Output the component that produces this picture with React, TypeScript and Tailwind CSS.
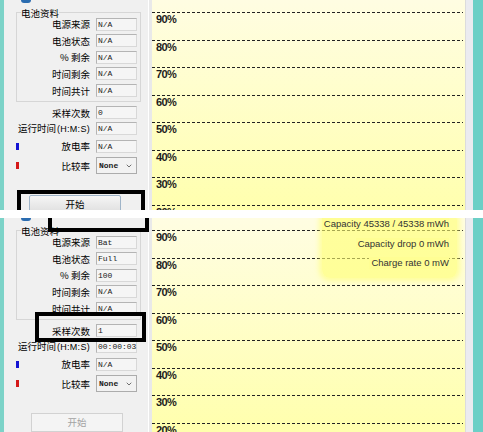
import { ChevronDown } from 'lucide-react';

interface PanelValues {
  source: string;
  state: string;
  remain: string;
  timeLeft: string;
  timeTotal: string;
  samples: string;
  runTime: string;
  rate: string;
  running: boolean;
}

const cjk = "font-['Noto_Sans_CJK_SC',sans-serif]";
const steps = ['90%', '80%', '70%', '60%', '50%', '40%', '30%', '20%'];

function Field({ value }: { value: string }) {
  return (
    <div className="h-[13px] w-[41px] shrink-0 border border-[#b4b4b4] border-b-[#d8d8d8] border-r-[#d8d8d8] bg-[#f5f5f5] pl-[1px] font-['Liberation_Mono',monospace] text-[8px] leading-[11px] text-[#1a1a1a]">
      {value}
    </div>
  );
}

function GroupRow({ label, value }: { label: string; value: string }) {
  return (
    <div className="flex h-[16.6px] items-center gap-[6px]">
      <span className="w-[73px] text-right">{label}</span>
      <Field value={value} />
    </div>
  );
}

function Panel({ v, marks }: { v: PanelValues; marks: 'top' | 'bottom' }) {
  return (
    <div className={`relative flex w-[144px] shrink-0 flex-col bg-[#f0f0f0] text-[9.5px] leading-[12px] text-black ${cjk}`}>
      <div className="ml-[17px] h-[3px] w-[10px] rounded-b-full bg-[#2b6cb0]" />

      <fieldset className="ml-[12px] mt-[4px] w-[125px] border border-[#d6d6d6] pb-[2px]">
        <legend className="ml-[4px] h-[12px] leading-[12px]">电池资料</legend>
        <div className="-mt-[3px]">
          <GroupRow label="电源来源" value={v.source} />
          <GroupRow label="电池状态" value={v.state} />
          <GroupRow label="% 剩余" value={v.remain} />
          <GroupRow label="时间剩余" value={v.timeLeft} />
          <GroupRow label="时间共计" value={v.timeTotal} />
        </div>
      </fieldset>

      <div className="mt-[3px] flex h-[16.5px] items-center gap-[6px]">
        <span className="w-[86px] text-right">采样次数</span>
        <Field value={v.samples} />
      </div>
      <div className="flex h-[16.5px] items-center gap-[6px]">
        <span className="w-[86px] whitespace-nowrap text-right">
          运行时间<span className="ml-[1px] font-['Liberation_Sans',sans-serif] text-[9px] tracking-[0.3px]">(H:M:S)</span>
        </span>
        <Field value={v.runTime} />
      </div>
      <div className="mt-[1px] flex h-[17px] items-center gap-[6px]">
        <div className="flex w-[86px] items-center">
          <span className="ml-[12px] h-[7px] w-[3px] bg-[#1414d2]" />
          <span className="flex-1 text-right">放电率</span>
        </div>
        <Field value={v.rate} />
      </div>
      <div className="mt-[3px] flex h-[18px] items-center gap-[6px]">
        <div className="flex w-[86px] items-center">
          <span className="ml-[12px] h-[7px] w-[3px] bg-[#d41818]" />
          <span className="flex-1 text-right">比较率</span>
        </div>
        <div className="flex h-[17px] w-[41px] items-center justify-between border border-[#acacac] bg-[#f2f2f2] pl-[2px] pr-[3px] font-['Liberation_Mono',monospace] text-[8px] font-bold text-[#222]">
          None
          <ChevronDown size={8} strokeWidth={2.5} className="text-[#555]" />
        </div>
      </div>

      {v.running ? (
        <div className="ml-[27px] mt-[20px] flex h-[20px] w-[92px] items-center justify-center border border-[#d2d2d2] bg-[#f4f4f4] text-[#a3a3a3]">
          开始
        </div>
      ) : (
        <div className="ml-[25px] mt-[20px] flex h-[20px] w-[92px] items-center justify-center rounded-[2px] border border-[#9fb4c8] bg-linear-to-b from-[#f6f6f6] to-[#dedede] text-black">
          开始
        </div>
      )}

      {marks === 'top' && (
        <div className="absolute left-[13px] top-[190px] h-[40px] w-[128px] border-[4px] border-black" />
      )}
      {marks === 'bottom' && (
        <>
          <div className="absolute left-[44px] top-[-20px] h-[34px] w-[101px] border-[4px] border-black" />
          <div className="absolute left-[31px] top-[94px] h-[30px] w-[111px] border-[4px] border-black" />
        </>
      )}
    </div>
  );
}

function Chart({ overlay }: { overlay: boolean }) {
  return (
    <div className="relative flex-1 bg-linear-to-b from-[#fffde2] to-[#ffffac] pt-[12px]">
      {steps.map((s) => (
        <div key={s} className="h-[27.5px]">
          <div className="mr-[2px] h-px bg-[repeating-linear-gradient(90deg,#222_0_3px,transparent_3px_5px)]" />
          <div className="ml-[4px] mt-[1px] font-['Liberation_Sans',sans-serif] text-[11px] font-bold leading-[10px] tracking-[-0.6px] text-[#1c1c1c]">
            {s}
          </div>
        </div>
      ))}
      {overlay && (
        <div className="absolute left-[170px] top-[-6px] flex h-[66px] w-[135px] flex-col items-end gap-[7.5px] whitespace-nowrap rounded-[8px] bg-[#ffff70]/60 pr-[8px] pt-[6px] font-['Liberation_Sans',sans-serif] text-[9.5px] leading-[12px] text-[#333] shadow-[0_0_5px_3px_rgba(255,255,110,0.55)]">
          <span className="bg-[#fffe94] pl-[2px]">Capacity 45338 / 45338 mWh</span>
          <span className="bg-[#fffe94] pl-[2px]">Capacity drop 0 mWh</span>
          <span className="bg-[#fffe94] pl-[2px]">Charge rate 0 mW</span>
        </div>
      )}
    </div>
  );
}

function BatteryWindow({ v, top }: { v: PanelValues; top: boolean }) {
  return (
    <div className="flex h-[214px] w-[483px]">
      <div className="w-[4px] shrink-0 bg-[#7cd3c8]" />
      <Panel v={v} marks={top ? 'top' : 'bottom'} />
      <div className="w-[4px] shrink-0 border-l border-white bg-[#e9e9e9]" />
      <Chart overlay={!top} />
      <div className="w-[8px] shrink-0 border-l border-[#dcdcdc] bg-[#ebebf0]" />
      <div className="w-[10px] shrink-0 bg-[#6ccfc6]" />
    </div>
  );
}

export default function App() {
  const idle: PanelValues = {
    source: 'N/A',
    state: 'N/A',
    remain: 'N/A',
    timeLeft: 'N/A',
    timeTotal: 'N/A',
    samples: '0',
    runTime: 'N/A',
    rate: 'N/A',
    running: false,
  };
  const running: PanelValues = {
    source: 'Bat',
    state: 'Full',
    remain: '100',
    timeLeft: 'N/A',
    timeTotal: 'N/A',
    samples: '1',
    runTime: '00:00:03',
    rate: 'N/A',
    running: true,
  };

  return (
    <div className="flex h-[432px] w-[483px] flex-col overflow-hidden bg-white">
      <div className="h-[210px] shrink-0 overflow-hidden">
        <BatteryWindow v={idle} top />
      </div>
      <div className="h-[8px] shrink-0 bg-white" />
      <div className="h-[214px] shrink-0 overflow-hidden">
        <BatteryWindow v={running} top={false} />
      </div>
    </div>
  );
}
